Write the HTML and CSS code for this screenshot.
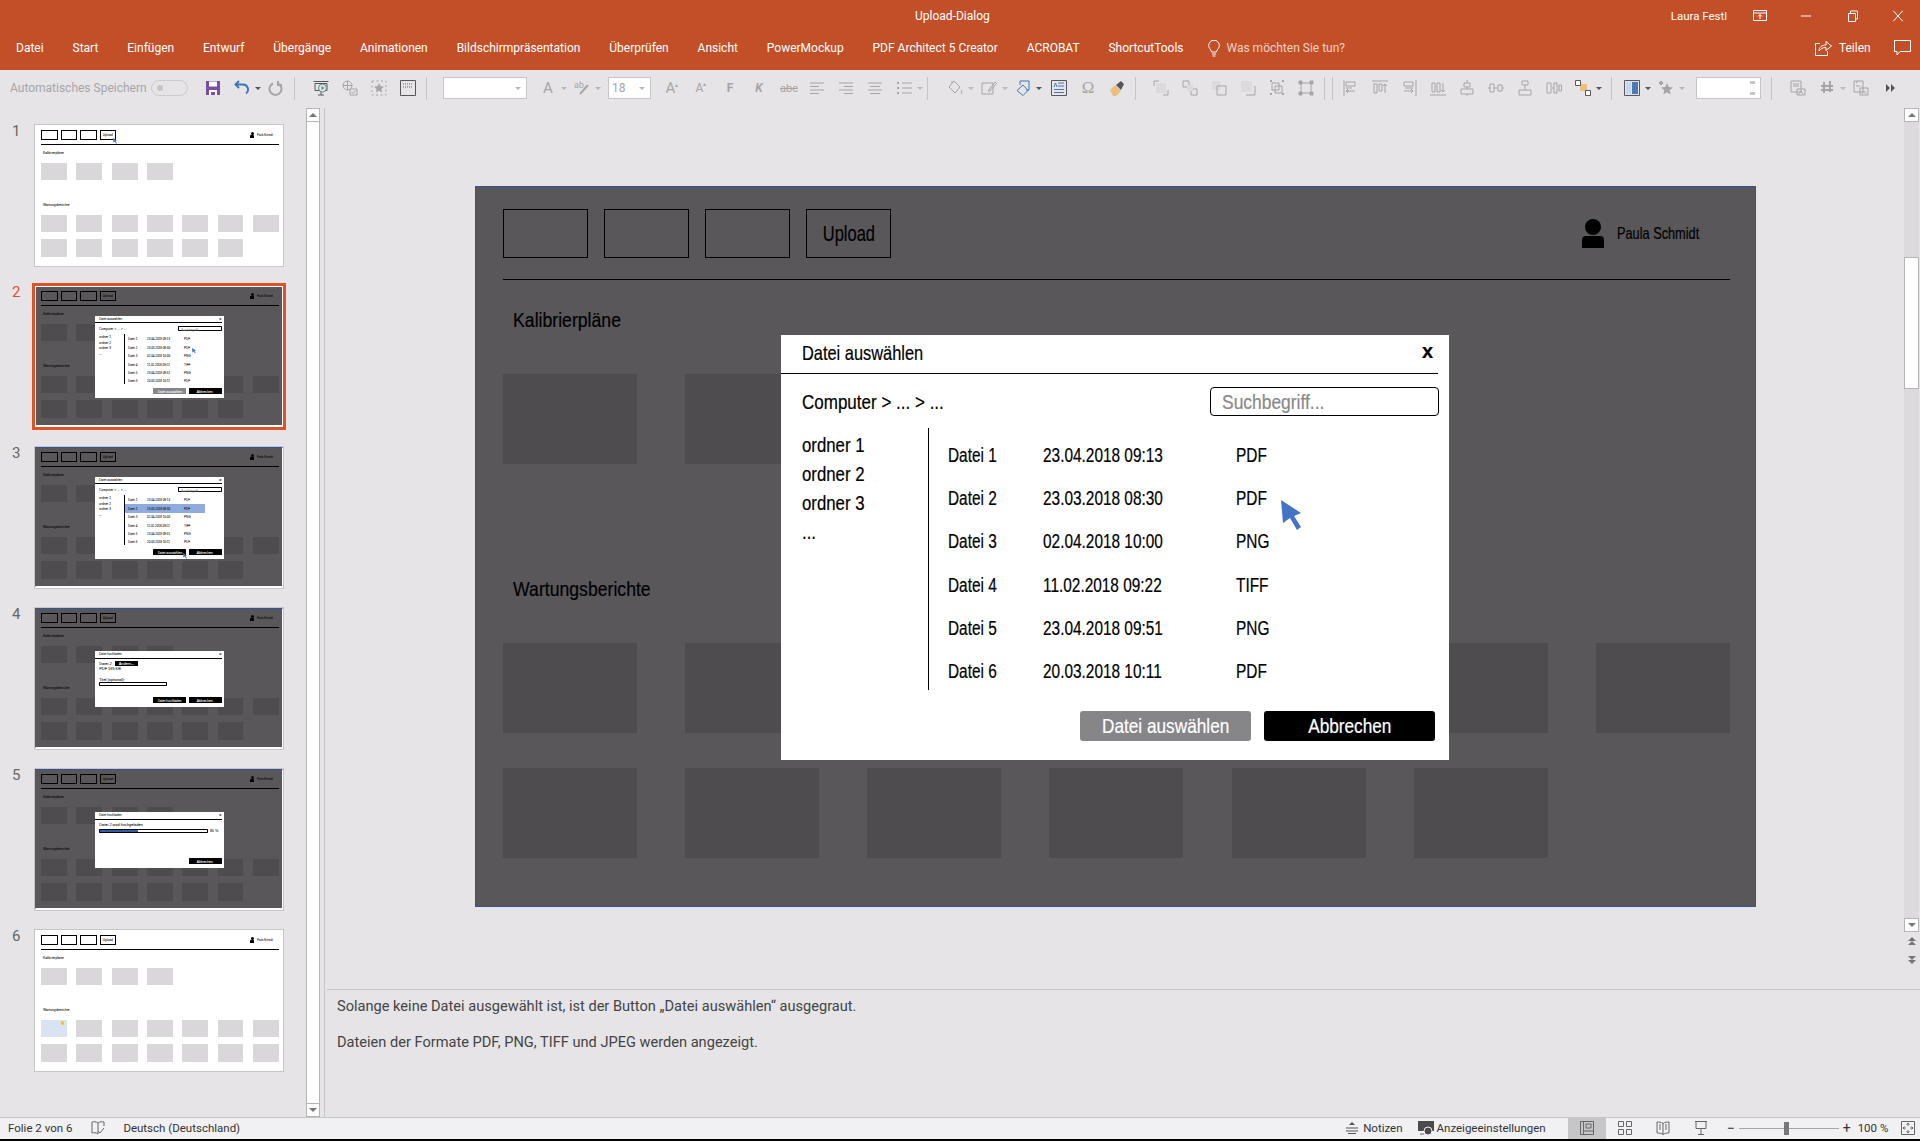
FILE: index.html
```html
<!DOCTYPE html>
<html lang="de">

<head>
  <meta charset="UTF-8" />
  <title>Upload-Dialog</title>
  <link rel="stylesheet" href="styles.css">
</head>

<body>
  <!-- Titelleiste -->
  <header class="titlebar">
    <span class="doc-title">Upload-Dialog</span>
    <span class="user-name">Laura Festl</span>
    <svg class="win-icon ribbon-mode" viewBox="0 0 14 12"><path d="M.5 .5h13v10H.5zM.5 3h13M7 9V4.500M5 6.500L7 4.500l2 2" /></svg>
    <svg class="win-icon minimize" viewBox="0 0 10 12"><path d="M0 6h10" /></svg>
    <svg class="win-icon restore" viewBox="0 0 10 12"><path d="M.5 3.500h7v8h-7zM2.500 3.500V1h7v8H7.500" /></svg>
    <svg class="win-icon close" viewBox="0 0 10 12"><path d="M0 .5l10 11M10 .5L0 11.500" /></svg>
  </header>

  <!-- Menüband -->
  <nav class="tabs">
    <span>Datei</span><span>Start</span><span>Einfügen</span><span>Entwurf</span><span>Übergänge</span><span>Animationen</span><span>Bildschirmpräsentation</span><span>Überprüfen</span><span>Ansicht</span><span>PowerMockup</span><span>PDF Architect 5 Creator</span><span>ACROBAT</span><span>ShortcutTools</span>
    <span class="tell-me">
      <svg class="bulb" viewBox="0 0 12 17"><path d="M3.500 12C3 9 .7 8.500 .7 5.500a5.300 5.300 0 0 1 10.600 0C11.300 8.500 9 9 8.500 12zM4 14h4M4.500 16h3" /></svg>
      Was möchten Sie tun?
    </span>
    <span class="share">
      <svg class="share-icon" viewBox="0 0 17 16"><path d="M5 3.500H.5v12h12V11M4 11c0-4 3-6 7-6V1.500L16.500 6 11 10.500V7.500c-3 0-5 1-7 3.500z" /></svg>
      Teilen
    </span>
    <svg class="comment-icon" viewBox="0 0 17 16"><path d="M.5 .5h16v11H6l-3 3.500v-3.500H.5z" /></svg>
  </nav>

  <!-- Symbolleiste -->
  <div class="toolbar">
    <span class="autosave">Automatisches Speichern</span>
    <span class="toggle"><i></i></span>
    <svg class="tool save" viewBox="0 0 16 16"><path fill="#7b4fa6" stroke="none" d="M1 1h14v14H1z" /><path fill="#fff" stroke="none" d="M4 1.500h8v5H4zM4 10h8v5H4z" /><path fill="#7b4fa6" stroke="none" d="M6 12h4v3H6z" /></svg>
    <svg class="tool" viewBox="0 0 16 16"><path class="blue" d="M5 1L1.500 4.500 5 8M2 4.500h7a5 5 0 0 1 3 9" /></svg>
    <i class="caret dark"></i>
    <svg class="tool" viewBox="0 0 16 16"><path class="thick" d="M5 3.500a6 6 0 1 0 5 0M10 1v4h4" /></svg>
    <i class="sep sep-wide"></i>
    <svg class="tool" viewBox="0 0 16 16"><path class="dark" d="M.5 1.500h15M2 3.500h12v7H2zM8 11v4M5 15h6" /><circle cx="9.500" cy="8" r="4" fill="#e6e4e7" stroke="#5a8a8a" /><path d="M8.500 6l3 2-3 2z" fill="#5a8a8a" stroke="none" /></svg>
    <svg class="tool" viewBox="0 0 16 16"><circle cx="5.500" cy="5.500" r="4.500" /><path d="M1 5.500h9M5.500 1v9M8 9h7v6H8zM9.500 12l1.500 1.500 2.500-3" /></svg>
    <svg class="tool" viewBox="0 0 16 16"><path d="M1 1h14v14H1z" stroke-dasharray="2 2.500" /><path fill="#a6a4a8" stroke="none" d="M8 3l1.500 3.300 3.500.4-2.600 2.400.7 3.500L8 10.800l-3.100 1.800.7-3.500L3 6.700l3.500-.4z" /></svg>
    <svg class="tool" viewBox="0 0 16 16"><path class="dark" d="M.5 .5h15v15H.5z" /><path class="blue-thin" d="M3 4h10M3 7h10" stroke-dasharray="1 1" /></svg>
    <i class="sep sep-box"></i>
    <span class="field field-font"><i class="caret"></i></span>
    <span class="tool-text size-lg">A</span>
    <i class="caret"></i>
    <svg class="tool" viewBox="0 0 16 16"><text x="0" y="8" class="mini-label">ab</text><path class="thick" d="M6 14L14 5" /></svg>
    <i class="caret"></i>
    <span class="field field-size">18<i class="caret"></i></span>
    <span class="tool-text size-lg">A<sup>▴</sup></span>
    <span class="tool-text">A<sup>▴</sup></span>
    <span class="tool-text bold">F</span>
    <span class="tool-text bold italic">K</span>
    <span class="tool-text strike">abc</span>
    <svg class="tool" viewBox="0 0 16 16"><path d="M1 3h14M1 6.500h9M1 10h14M1 13.500h9" /></svg>
    <svg class="tool" viewBox="0 0 16 16"><path d="M1 3h14M6 6.500h9M1 10h14M6 13.500h9" /></svg>
    <svg class="tool" viewBox="0 0 16 16"><path d="M1 3h14M3 6.500h10M1 10h14M3 13.500h10" /></svg>
    <svg class="tool" viewBox="0 0 16 16"><path d="M6 3h10M6 8h10M6 13h10" /><path class="thick" d="M1 3h2M1 8h2M1 13h2" /></svg>
    <i class="caret"></i>
    <i class="sep sep-fill"></i>
    <svg class="tool" viewBox="0 0 16 16"><path d="M7 1l6 6-5 6-6-6zM5 3V1M14 10c1 2 1 3 0 4" /></svg>
    <i class="caret"></i>
    <svg class="tool" viewBox="0 0 16 16"><path d="M1 3h11v11H1zM7 11l7-9 1.500 1.500L9 11z" /></svg>
    <i class="caret"></i>
    <svg class="tool" viewBox="0 0 16 16"><path class="blue-thin" d="M5 5V1h9v9h-3M8 5l5 5.500L8 15.500 2 10.500z" /></svg>
    <i class="caret dark"></i>
    <svg class="tool after-caret" viewBox="0 0 16 16"><path class="dark" d="M.5 .5h15v15H.5z" /><path class="blue-thin" d="M7 3h6M7 6h6M3 9.500h10M3 12.500h10M3 7l1.500-4L6 7" /></svg>
    <span class="tool-text omega">Ω</span>
    <svg class="tool" viewBox="0 0 16 16"><path fill="#edbf7c" stroke="none" d="M1 10l5-5 6 6-5 5H4z" /><path fill="#55565a" stroke="none" d="M7 5l5-4 3 3-3 6z" /></svg>
    <i class="sep sep-arrange"></i>
    <svg class="tool" viewBox="0 0 16 16"><path d="M1 1h5M1 1v5M15 15h-5M15 15v-5" /><path fill="#dcdadd" stroke="none" d="M3 3h10v10H3z" /></svg>
    <svg class="tool" viewBox="0 0 16 16"><path d="M1 1h6v6H1zM9 9h6v6H9z" /><path fill="#dcdadd" stroke="none" d="M5 5h6v6H5z" /></svg>
    <svg class="tool" viewBox="0 0 16 16"><path fill="#dcdadd" stroke="none" d="M1 1h9v9H1z" /><path d="M6 6h9v9H6z" /></svg>
    <svg class="tool" viewBox="0 0 16 16"><path fill="#dcdadd" stroke="none" d="M1 1h11v11H1z" /><path d="M6 15h9V6" /></svg>
    <svg class="tool" viewBox="0 0 16 16"><path d="M3 3h7v7H3zM6 6h7v7H6z" /><path class="thick" d="M1 1h2M13 1h2M1 14h2M13 14h2" /></svg>
    <svg class="tool" viewBox="0 0 16 16"><path d="M3 3h10v10H3z" /><path class="square" d="M1 1h3v3H1zM12 1h3v3h-3zM1 12h3v3H1zM12 12h3v3h-3z" /></svg>
    <i class="sep"></i>
    <i class="sep"></i>
    <svg class="tool" viewBox="0 0 16 16"><path d="M1 0v16M3 2h9v4H3zM3 8h6M6 11H3M5 9l-2 2 2 2M3 11h9" /></svg>
    <svg class="tool" viewBox="0 0 16 16"><path d="M0 1h16M2 4h3v9H2zM7 4h3v7H7zM13 13V4M11 6l2-2 2 2" /></svg>
    <svg class="tool" viewBox="0 0 16 16"><path d="M15 0v16M3 2h9v4H3zM4 8h8M3 11h9M10 9l2 2-2 2" /></svg>
    <svg class="tool" viewBox="0 0 16 16"><path d="M0 15h16M2 3h3v9H2zM7 3h3v9H7zM13 3v9M11 10l2 2 2-2" /></svg>
    <svg class="tool" viewBox="0 0 16 16"><path d="M8 0v3M8 7v2M8 14v2M5 3h6v4H5zM2 9h12v5H2z" /></svg>
    <svg class="tool" viewBox="0 0 16 16"><path d="M0 8h2M6 8h3M14 8h2M2 4h4v8H2zM10 5h4v6h-4z" /></svg>
    <svg class="tool" viewBox="0 0 16 16"><path d="M5 1h6v4H5zM2 10h12v5H2zM8 5v5" /></svg>
    <svg class="tool" viewBox="0 0 16 16"><path d="M1 3h4v10H1zM6 8h2M8 3h3v10H8zM13 5h2.500v6H13z" /></svg>
    <svg class="tool" viewBox="0 0 16 16"><path fill="#edbf7c" stroke="none" d="M5 4h7v7H5z" /><path class="dark" fill="#fff" d="M.5 .5h5v5h-5zM10.500 10.500h5v5h-5z" /></svg>
    <i class="caret dark"></i>
    <i class="sep sep-theme"></i>
    <svg class="tool" viewBox="0 0 16 16"><path d="M.5 .5h15v15H.5z" class="dark" /><path fill="#c7d6ec" stroke="none" d="M2 2h5v12H2z" /><path fill="#4a7ab5" stroke="none" d="M8 2h6v12H8z" /></svg>
    <i class="caret dark"></i>
    <svg class="tool" viewBox="0 0 16 16"><path fill="#a6a4a8" stroke="none" d="M9 3l1.700 4 4.300.4-3.300 2.800 1 4.300L9 12.300 5.300 14.500l1-4.300L3 7.400l4.300-.4z" /><path class="thick" d="M3 1v4M1 3h4" /></svg>
    <i class="caret"></i>
    <span class="field field-spin"><i class="spin"></i></span>
    <i class="sep sep-compare"></i>
    <svg class="tool" viewBox="0 0 16 16"><path d="M1 1h10v11H1zM3 4h6M3 6h6M7 9h8v6H7zM9 14l2-3 2 3" /></svg>
    <svg class="tool" viewBox="0 0 16 16"><path class="thick" d="M5 2v11M11 1v11M2 6h12M2 10h12" /></svg>
    <i class="caret"></i>
    <svg class="tool" viewBox="0 0 16 16"><path d="M1 1h9v11H1zM7 8h8v7H7zM9 14l2-3 2 3M3 3l2-2M3 6h4" /></svg>
    <svg class="tool more" viewBox="0 0 16 16"><path class="more-arrows" d="M4 4l4 4-4 4zM9 4l4 4-4 4z" /></svg>
  </div>

  <main class="workspace">
    <!-- Folienübersicht -->
    <aside class="panel">
      <ol class="thumbs">
        <li class="thumb-row">
          <span class="thumb-num">1</span>
          <div class="thumb">
            <div class="slide">
              <div class="slide-nav"><span class="nav-box"></span><span class="nav-box"></span><span class="nav-box"></span><span class="nav-box hand"><span>Upload</span></span>
                <span class="person"><i class="head"></i><i class="body"></i></span><span class="person-name hand">Paula Schmidt</span></div>
              <hr class="rule">
              <h2 class="heading hand">Kalibrierpläne</h2>
              <div class="tile-row"><i></i><i></i><i></i><i></i></div>
              <h2 class="heading heading-low hand">Wartungsberichte</h2>
              <div class="tile-row"><i></i><i></i><i></i><i></i><i></i><i></i><i></i></div>
              <div class="tile-row tile-row-last"><i></i><i></i><i></i><i></i><i></i><i></i></div>
              <svg class="pointer at-upload" viewBox="0 0 20 30"><path d="M0 0l2 23 7-5 7 12 4-3-7-11 7-3z" /></svg>
            </div>
          </div>
        </li>
        <li class="thumb-row current">
          <span class="thumb-num">2</span>
          <div class="thumb">
            <div class="slide dim">
              <div class="slide-nav"><span class="nav-box"></span><span class="nav-box"></span><span class="nav-box"></span><span class="nav-box hand"><span>Upload</span></span>
                <span class="person"><i class="head"></i><i class="body"></i></span><span class="person-name hand">Paula Schmidt</span></div>
              <hr class="rule">
              <h2 class="heading hand">Kalibrierpläne</h2>
              <div class="tile-row"><i></i><i></i><i></i><i></i></div>
              <h2 class="heading heading-low hand">Wartungsberichte</h2>
              <div class="tile-row"><i></i><i></i><i></i><i></i><i></i><i></i><i></i></div>
              <div class="tile-row tile-row-last"><i></i><i></i><i></i><i></i><i></i><i></i></div>
              <section class="dialog hand">
                <div class="dialog-head"><span class="dialog-title">Datei auswählen</span><span class="dialog-x">x</span></div>
                <div class="crumb-row"><span class="crumb">Computer &gt; ... &gt; ...</span><span class="search"><span>Suchbegriff...</span></span></div>
                <div class="dialog-body">
                  <ul class="folders"><li>ordner 1</li><li>ordner 2</li><li>ordner 3</li><li>...</li></ul>
                  <div class="files">
                    <div class="file"><span>Datei 1</span><span>23.04.2018 09:13</span><span>PDF</span></div>
                    <div class="file"><span>Datei 2</span><span>23.03.2018 08:30</span><span>PDF</span></div>
                    <div class="file"><span>Datei 3</span><span>02.04.2018 10:00</span><span>PNG</span></div>
                    <div class="file"><span>Datei 4</span><span>11.02.2018 09:22</span><span>TIFF</span></div>
                    <div class="file"><span>Datei 5</span><span>23.04.2018 09:51</span><span>PNG</span></div>
                    <div class="file"><span>Datei 6</span><span>20.03.2018 10:11</span><span>PDF</span></div>
                  </div>
                </div>
                <div class="dialog-foot"><span class="btn btn-off"><span>Datei auswählen</span></span><span class="btn"><span>Abbrechen</span></span></div>
                <svg class="pointer at-file" viewBox="0 0 20 30"><path d="M0 0l2 23 7-5 7 12 4-3-7-11 7-3z" /></svg>
              </section>
            </div>
          </div>
        </li>
        <li class="thumb-row">
          <span class="thumb-num">3</span>
          <div class="thumb">
            <div class="slide dim">
              <div class="slide-nav"><span class="nav-box"></span><span class="nav-box"></span><span class="nav-box"></span><span class="nav-box hand"><span>Upload</span></span>
                <span class="person"><i class="head"></i><i class="body"></i></span><span class="person-name hand">Paula Schmidt</span></div>
              <hr class="rule">
              <h2 class="heading hand">Kalibrierpläne</h2>
              <div class="tile-row"><i></i><i></i><i></i><i></i></div>
              <h2 class="heading heading-low hand">Wartungsberichte</h2>
              <div class="tile-row"><i></i><i></i><i></i><i></i><i></i><i></i><i></i></div>
              <div class="tile-row tile-row-last"><i></i><i></i><i></i><i></i><i></i><i></i></div>
              <section class="dialog hand">
                <div class="dialog-head"><span class="dialog-title">Datei auswählen</span><span class="dialog-x">x</span></div>
                <div class="crumb-row"><span class="crumb">Computer &gt; ... &gt; ...</span><span class="search"><span>Suchbegriff...</span></span></div>
                <div class="dialog-body">
                  <ul class="folders"><li>ordner 1</li><li>ordner 2</li><li>ordner 3</li><li>...</li></ul>
                  <div class="files">
                    <div class="file"><span>Datei 1</span><span>23.04.2018 09:13</span><span>PDF</span></div>
                    <div class="file selected"><span>Datei 2</span><span>23.03.2018 08:30</span><span>PDF</span></div>
                    <div class="file"><span>Datei 3</span><span>02.04.2018 10:00</span><span>PNG</span></div>
                    <div class="file"><span>Datei 4</span><span>11.02.2018 09:22</span><span>TIFF</span></div>
                    <div class="file"><span>Datei 5</span><span>23.04.2018 09:51</span><span>PNG</span></div>
                    <div class="file"><span>Datei 6</span><span>20.03.2018 10:11</span><span>PDF</span></div>
                  </div>
                </div>
                <div class="dialog-foot"><span class="btn"><span>Datei auswählen</span></span><span class="btn"><span>Abbrechen</span></span></div>
                <svg class="pointer at-button" viewBox="0 0 20 30"><path d="M0 0l2 23 7-5 7 12 4-3-7-11 7-3z" /></svg>
              </section>
            </div>
          </div>
        </li>
        <li class="thumb-row">
          <span class="thumb-num">4</span>
          <div class="thumb">
            <div class="slide dim">
              <div class="slide-nav"><span class="nav-box"></span><span class="nav-box"></span><span class="nav-box"></span><span class="nav-box hand"><span>Upload</span></span>
                <span class="person"><i class="head"></i><i class="body"></i></span><span class="person-name hand">Paula Schmidt</span></div>
              <hr class="rule">
              <h2 class="heading hand">Kalibrierpläne</h2>
              <div class="tile-row"><i></i><i></i><i></i><i></i></div>
              <h2 class="heading heading-low hand">Wartungsberichte</h2>
              <div class="tile-row"><i></i><i></i><i></i><i></i><i></i><i></i><i></i></div>
              <div class="tile-row tile-row-last"><i></i><i></i><i></i><i></i><i></i><i></i></div>
              <section class="dialog dialog-short hand">
                <div class="dialog-head"><span class="dialog-title">Datei hochladen</span><span class="dialog-x">x</span></div>
                <div class="upload-info">
                  <div>Datei 2 <span class="mini-btn">Ändern...</span></div>
                  <div>PDF 165 KB</div>
                  <div class="title-label">Titel (optional):</div>
                  <div class="title-input"></div>
                </div>
                <div class="dialog-foot"><span class="btn"><span>Datei hochladen</span></span><span class="btn"><span>Abbrechen</span></span></div>
              </section>
            </div>
          </div>
        </li>
        <li class="thumb-row">
          <span class="thumb-num">5</span>
          <div class="thumb">
            <div class="slide dim">
              <div class="slide-nav"><span class="nav-box"></span><span class="nav-box"></span><span class="nav-box"></span><span class="nav-box hand"><span>Upload</span></span>
                <span class="person"><i class="head"></i><i class="body"></i></span><span class="person-name hand">Paula Schmidt</span></div>
              <hr class="rule">
              <h2 class="heading hand">Kalibrierpläne</h2>
              <div class="tile-row"><i></i><i></i><i></i><i></i></div>
              <h2 class="heading heading-low hand">Wartungsberichte</h2>
              <div class="tile-row"><i></i><i></i><i></i><i></i><i></i><i></i><i></i></div>
              <div class="tile-row tile-row-last"><i></i><i></i><i></i><i></i><i></i><i></i></div>
              <section class="dialog dialog-short hand">
                <div class="dialog-head"><span class="dialog-title">Datei hochladen</span><span class="dialog-x">x</span></div>
                <div class="upload-info">
                  <div>Datei 2 wird hochgeladen</div>
                  <div class="progress"><span class="progress-bar"><i class="progress-fill"></i></span>35 %</div>
                </div>
                <div class="dialog-foot"><span class="btn"><span>Abbrechen</span></span></div>
              </section>
            </div>
          </div>
        </li>
        <li class="thumb-row">
          <span class="thumb-num">6</span>
          <div class="thumb">
            <div class="slide">
              <div class="slide-nav"><span class="nav-box"></span><span class="nav-box"></span><span class="nav-box"></span><span class="nav-box hand"><span>Upload</span></span>
                <span class="person"><i class="head"></i><i class="body"></i></span><span class="person-name hand">Paula Schmidt</span></div>
              <hr class="rule">
              <h2 class="heading hand">Kalibrierpläne</h2>
              <div class="tile-row"><i></i><i></i><i></i><i></i></div>
              <h2 class="heading heading-low hand">Wartungsberichte</h2>
              <div class="tile-row"><i class="tile-new"></i><i></i><i></i><i></i><i></i><i></i><i></i></div>
              <div class="tile-row tile-row-last"><i></i><i></i><i></i><i></i><i></i><i></i><i></i></div>
            </div>
          </div>
        </li>
      </ol>
      <div class="scroll-left">
        <span class="scroll-btn"><i class="arrow-up"></i></span>
        <span class="scroll-fill"></span>
        <span class="scroll-btn"><i class="arrow-down"></i></span>
      </div>
    </aside>

    <div class="editor">
      <div class="stage">
        <!-- aktuelle Folie -->
        <div class="slide dim main-slide">
          <div class="slide-nav"><span class="nav-box"></span><span class="nav-box"></span><span class="nav-box"></span><span class="nav-box hand"><span>Upload</span></span>
            <span class="person"><i class="head"></i><i class="body"></i></span><span class="person-name hand">Paula Schmidt</span></div>
          <hr class="rule">
          <h2 class="heading hand">Kalibrierpläne</h2>
          <div class="tile-row"><i></i><i></i><i></i><i></i></div>
          <h2 class="heading heading-low hand">Wartungsberichte</h2>
          <div class="tile-row"><i></i><i></i><i></i><i></i><i></i><i></i><i></i></div>
          <div class="tile-row tile-row-last"><i></i><i></i><i></i><i></i><i></i><i></i></div>
          <section class="dialog hand">
            <div class="dialog-head"><span class="dialog-title">Datei auswählen</span><span class="dialog-x">x</span></div>
            <div class="crumb-row"><span class="crumb">Computer &gt; ... &gt; ...</span><span class="search"><span>Suchbegriff...</span></span></div>
            <div class="dialog-body">
              <ul class="folders"><li>ordner 1</li><li>ordner 2</li><li>ordner 3</li><li>...</li></ul>
              <div class="files">
                <div class="file"><span>Datei 1</span><span>23.04.2018 09:13</span><span>PDF</span></div>
                <div class="file"><span>Datei 2</span><span>23.03.2018 08:30</span><span>PDF</span></div>
                <div class="file"><span>Datei 3</span><span>02.04.2018 10:00</span><span>PNG</span></div>
                <div class="file"><span>Datei 4</span><span>11.02.2018 09:22</span><span>TIFF</span></div>
                <div class="file"><span>Datei 5</span><span>23.04.2018 09:51</span><span>PNG</span></div>
                <div class="file"><span>Datei 6</span><span>20.03.2018 10:11</span><span>PDF</span></div>
              </div>
            </div>
            <div class="dialog-foot"><span class="btn btn-off"><span>Datei auswählen</span></span><span class="btn"><span>Abbrechen</span></span></div>
            <svg class="pointer at-file" viewBox="0 0 20 30"><path d="M0 0l2 23 7-5 7 12 4-3-7-11 7-3z" /></svg>
          </section>
        </div>
        <div class="scroll-right">
          <span class="scroll-btn"><i class="arrow-up"></i></span>
          <span class="scroll-thumb"></span>
          <span class="scroll-btn scroll-btn-end"><i class="arrow-down"></i></span>
          <svg class="page-arrows" viewBox="0 0 10 28"><path d="M5 0l4 4H1zM5 4l4 4H1zM1 19l4 4 4-4zM1 23l4 4 4-4z" /></svg>
        </div>
      </div>
      <div class="notes">
        <p>Solange keine Datei ausgewählt ist, ist der Button „Datei auswählen“ ausgegraut.</p>
        <p>Dateien der Formate PDF, PNG, TIFF und JPEG werden angezeigt.</p>
      </div>
    </div>
  </main>

  <!-- Statusleiste -->
  <footer class="statusbar">
    <span>Folie 2 von 6</span>
    <svg class="status-icon spell" viewBox="0 0 14 14"><path d="M7 2C5 .5 3 .5 1 1v11c2-.5 4-.5 6 1V2zM7 2c2-1.500 4-1.500 6-1v4M7 10l2 2 4-5" /></svg>
    <span class="lang">Deutsch (Deutschland)</span>
    <svg class="status-icon notes-icon" viewBox="0 0 12 12"><path d="M0 6h12M0 9h12M2 11.500h8" /><path d="M6 0l3 3H3z" fill="#555" stroke="none" /></svg>
    <span class="status-notes">Notizen</span>
    <svg class="status-icon display-icon" viewBox="0 0 16 15"><path fill="#4c4a4d" stroke="none" d="M0 0h16v10H0z" /><circle cx="10" cy="10" r="4" fill="#4c4a4d" stroke="#f1f0f2" /><path d="M2 13h4" /></svg>
    <span class="status-display">Anzeigeeinstellungen</span>
    <span class="view view-on"><svg class="status-icon" viewBox="0 0 14 14"><path d="M.5 .5h13v13H.5zM3.500 .5v13M3.500 10h10M6 3h5v4H6z" /></svg></span>
    <span class="view"><svg class="status-icon" viewBox="0 0 14 14"><path d="M.5 .5h5v5h-5zM8.500 .5h5v5h-5zM.5 8.500h5v5h-5zM8.500 8.500h5v5h-5z" /></svg></span>
    <span class="view"><svg class="status-icon" viewBox="0 0 14 14"><path d="M1 1c2 0 4 0 6 1.500C9 1 11 1 13 1v11c-2 0-4 0-6 1.500C5 12 3 12 1 12zM7 2.500v11M3 4h2M3 6h2M3 8h2M9 4h2M9 6h2M9 8h2" /></svg></span>
    <span class="view"><svg class="status-icon" viewBox="0 0 14 14"><path d="M1 .5h12M2 .5v7h10v-7M7 7.500V13M4 13.500h6" /></svg></span>
    <span class="zoom-minus">−</span>
    <span class="slider"><i></i></span>
    <span class="zoom-plus">+</span>
    <span class="zoom-value">100 %</span>
    <svg class="status-icon fit" viewBox="0 0 14 14"><path d="M.5 .5h13v13H.5zM7 2v3M5.500 3.500L7 2l1.500 1.500M7 12V9M5.500 10.500L7 12l1.500-1.500M2 7h3M3.500 5.500L2 7l1.500 1.500M12 7H9M10.500 5.500L12 7l-1.500 1.500" /></svg>
  </footer>
  <div class="desktop-edge"></div>
</body>

</html>
```

FILE: styles.css
```css
* {
  margin: 0;
  padding: 0;
  list-style: none;
  box-sizing: border-box;
}

html,
body {
  height: 100%;
}

body {
  display: flex;
  flex-direction: column;
  overflow: hidden;
  background-color: #e6e4e7;
  color: #444;
  font-family: Roboto, "Liberation Sans", sans-serif;
  font-size: 12px;
}

/* Titelleiste */
.titlebar {
  height: 35px;
  display: flex;
  align-items: center;
  padding-bottom: 3px;
  background-color: #c24f28;
  color: #fff;
}

.doc-title {
  margin-left: 915px;
}

.user-name {
  margin-left: 681px;
  font-size: 11.500px;
}

.win-icon {
  height: 12px;
  flex: none;
  fill: none;
  stroke: #fff;
}

.ribbon-mode {
  width: 14px;
  margin-left: 26px;
}

.minimize {
  width: 10px;
  margin-left: 34px;
}

.restore {
  width: 10px;
  margin-left: 37px;
}

.close {
  width: 10px;
  margin-left: 35px;
}

/* Reiter */
.tabs {
  height: 35px;
  display: flex;
  align-items: center;
  gap: 28.900px;
  padding: 0 0 9px 16px;
  background-color: #c24f28;
  color: #fff;
}

.tell-me {
  display: flex;
  align-items: center;
  gap: 6px;
  margin-left: -4px;
  color: #f0d2c6;
}

.bulb {
  width: 12px;
  height: 17px;
  fill: none;
  stroke: #fff;
}

.share {
  display: flex;
  align-items: center;
  gap: 7px;
  margin-left: 441px;
}

.share-icon,
.comment-icon {
  width: 17px;
  height: 16px;
  fill: none;
  stroke: #fff;
}

.comment-icon {
  margin-left: -6px;
}

/* Symbolleiste */
.toolbar {
  height: 38px;
  display: flex;
  align-items: center;
  gap: 13px;
  padding: 0 0 2px 10px;
  white-space: nowrap;
}

.autosave {
  width: 133px;
  color: #a6a4a8;
}

.toggle {
  width: 37px;
  height: 16px;
  margin-left: -5px;
  padding: 4px 5px;
  border: 1px solid #cdcbce;
  border-radius: 8px;
}

.toggle i {
  display: block;
  width: 6px;
  height: 6px;
  border-radius: 50%;
  background-color: #c8c6c9;
}

.tool {
  width: 16px;
  height: 16px;
  flex: none;
  fill: none;
  stroke: #a6a4a8;
}

.save {
  margin-left: 4px;
}

.after-caret {
  margin-left: 2px;
}

.tool .blue {
  stroke: #3f77b8;
  stroke-width: 2;
}

.tool .blue-thin {
  stroke: #3f77b8;
}

.tool .dark {
  stroke: #58565a;
}

.tool .thick {
  stroke-width: 2;
}

.tool .square {
  fill: #a6a4a8;
}

.tool .more-arrows {
  fill: #555;
  stroke: none;
}

.mini-label {
  font-size: 9px;
  fill: #a6a4a8;
  stroke: none;
}

.caret {
  flex: none;
  width: 0;
  height: 0;
  margin: 0 -6px 0 -8px;
  border-left: 3px solid transparent;
  border-right: 3px solid transparent;
  border-top: 3px solid #b9b7ba;
}

.caret.dark {
  border-top-color: #555;
}

.sep {
  flex: none;
  width: 1px;
  height: 23px;
  margin: 0 -3px;
  background-color: #c6c4c7;
}

.sep-wide {
  margin-right: 5px;
}

.sep-box {
  margin-right: 3px;
}

.sep-fill {
  margin-right: 6px;
}

.sep-arrange {
  margin-right: 4px;
}

.sep-theme {
  margin: 0 -1px 0 2px;
}

.sep-compare {
  margin-right: 5px;
}

.field {
  flex: none;
  height: 22px;
  display: flex;
  align-items: center;
  justify-content: space-between;
  padding: 0 9px 0 3px;
  background-color: #fff;
  border: 1px solid #c6c4c7;
  color: #a6a4a8;
}

.field .caret {
  margin: 0;
}

.field-font {
  width: 84px;
  justify-content: flex-end;
  padding-right: 5px;
}

.field-size {
  width: 43px;
  padding-right: 5px;
}

.field-spin {
  width: 65px;
  margin-left: 4px;
  justify-content: flex-end;
  padding-right: 5px;
}

.spin {
  width: 5px;
  height: 14px;
  background: linear-gradient(#c6c4c7 3px, transparent 3px, transparent 11px, #c6c4c7 11px);
}

.tool-text {
  flex: none;
  width: 16px;
  text-align: center;
  color: #a6a4a8;
}

.size-lg {
  font-size: 15px;
}

.tool-text sup {
  font-size: 6px;
  vertical-align: 6px;
  line-height: 0;
}

.bold {
  font-weight: 700;
}

.italic {
  font-style: italic;
}

.strike {
  text-decoration: line-through;
  font-size: 11px;
}

.omega {
  font-size: 17px;
  font-family: "Liberation Serif", serif;
}

/* Arbeitsbereich */
.workspace {
  flex: 1;
  min-height: 0;
  display: flex;
}

.panel {
  width: 325px;
  flex: none;
  display: flex;
  border-right: 1px solid #c6c6c6;
}

.thumbs {
  width: 306px;
  flex: none;
  padding-top: 16px;
}

.thumb-row {
  display: flex;
  height: 161px;
  padding-left: 12px;
}

.thumb-num {
  width: 22px;
  font-size: 15px;
  line-height: 14px;
  color: #666;
}

.thumb {
  width: 250px;
  height: 143px;
  background-color: #fff;
  border: 1px solid #c6c6c6;
}

.thumb .slide {
  zoom: 0.1936;
}

.thumb .slide.dim {
  border-color: #2f5597 #fff #fff #3c5c94;
}

.current .thumb-num {
  color: #d9532b;
}

.current .thumb {
  outline: 3px solid #df5226;
  outline-offset: -1px;
  border-color: #fff;
}

.current .slide.dim {
  border-color: #fff;
}

.scroll-left {
  width: 14px;
  display: flex;
  flex-direction: column;
}

.scroll-btn {
  height: 14px;
  flex: none;
  display: flex;
  align-items: center;
  justify-content: center;
  background-color: #fff;
  border: 1px solid #b5b3b6;
}

.scroll-fill {
  flex: 1;
  background-color: #fff;
  border: solid #b5b3b6;
  border-width: 0 1px;
}

.arrow-up,
.arrow-down {
  width: 0;
  height: 0;
  border-left: 4px solid transparent;
  border-right: 4px solid transparent;
}

.arrow-up {
  border-bottom: 4px solid #777;
}

.arrow-down {
  border-top: 4px solid #777;
}

.editor {
  flex: 1;
  min-width: 0;
  display: flex;
  flex-direction: column;
  padding-left: 2px;
}

.stage {
  height: 881px;
  flex: none;
  display: flex;
  justify-content: space-between;
  padding: 78px 1px 0 148px;
}

.notes {
  flex: 1;
  padding: 6px 10px;
  border-top: 1px solid #c6c6c6;
  font-size: 14.600px;
  color: #444;
}

.notes p {
  line-height: 20px;
  margin-bottom: 16px;
}

.scroll-right {
  width: 15px;
  height: 824px;
  position: relative;
  margin-top: -78px;
  display: flex;
  flex-direction: column;
  background-color: #dcdadd;
}

.scroll-thumb {
  height: 132px;
  margin-top: 135px;
  background-color: #fff;
  border: 1px solid #b5b3b6;
}

.scroll-btn-end {
  margin-top: auto;
}

.page-arrows {
  position: absolute;
  left: 3px;
  top: 829px;
  width: 10px;
  height: 28px;
  fill: #777;
}

/* Folie */
.slide {
  width: 1281px;
  height: 721px;
  flex: none;
  position: relative;
  padding: 22px 25px 0 27px;
  background-color: #fff;
  border: 1px solid #fff;
  color: #000;
}

.slide.dim {
  background-color: #59575a;
  border-color: #2f5597;
}

/* Handschrift gibt es nicht als Font: schmal gezogen */
.hand {
  font-family: "Liberation Sans", sans-serif;
  font-size: 20px;
  font-weight: 400;
  white-space: nowrap;
  -webkit-text-stroke: 0.2px currentColor;
}

.slide-nav {
  height: 49px;
  display: flex;
  align-items: center;
  gap: 16px;
}

.nav-box {
  width: 85px;
  height: 49px;
  flex: none;
  display: flex;
  align-items: center;
  justify-content: center;
  border: 1px solid #000;
  font-size: 22px;
}

.nav-box span {
  transform: scaleX(0.75);
}

.person {
  width: 22px;
  flex: none;
  margin-left: 675px;
  display: flex;
  flex-direction: column;
  align-items: center;
  gap: 1px;
}

.head {
  width: 16px;
  height: 16px;
  border-radius: 50%;
  background-color: #000;
}

.body {
  width: 22px;
  height: 12px;
  border-radius: 4px 4px 0 0;
  background-color: #000;
}

.person-name {
  margin-left: -3px;
  font-size: 17px;
  transform: scaleX(0.75);
  transform-origin: left center;
}

.rule {
  height: 0;
  width: 1227px;
  margin-top: 21px;
  border: 0;
  border-top: 1px solid #000;
}

.thumb .rule {
  border-top-width: 8px;
}

.thumb .nav-box {
  border-width: 8px;
}

.heading {
  height: 94px;
  padding: 27px 0 0 12px;
  font-size: 21px;
  line-height: 26px;
  transform: scaleX(0.84);
  transform-origin: left center;
}

.heading-low {
  height: 179px;
  padding-top: 112px;
}

.tile-row {
  display: grid;
  grid-template-columns: repeat(7, 134px);
  justify-content: space-between;
  width: 1227px;
}

.tile-row-last {
  margin-top: 35px;
}

.tile-row i {
  height: 90px;
  position: relative;
  background-color: #d9d7da;
}

.dim .tile-row i {
  background-color: #4e4c4f;
}

.tile-row .tile-new {
  background-color: #dae3f3;
}

.tile-new::after {
  content: "";
  position: absolute;
  top: 4px;
  right: 14px;
  width: 18px;
  height: 24px;
  border-radius: 50%;
  background-color: #ffc000;
}

/* Dialog */
.dialog {
  position: absolute;
  left: 305px;
  top: 148px;
  width: 668px;
  height: 425px;
  background-color: #fff;
  color: #000;
}

.dialog-short {
  top: 217px;
  height: 289px;
}

.dialog-head {
  height: 39px;
  margin-right: 11px;
  padding: 5px 0 0 21px;
  display: flex;
  justify-content: space-between;
  font-size: 21px;
  line-height: 25px;
  border-bottom: 1px solid #000;
}

.thumb .dialog-head {
  border-bottom-width: 8px;
}

.dialog-title {
  transform: scaleX(0.78);
  transform-origin: left center;
}

.dialog-x {
  margin-right: 5px;
  font-size: 20px;
  line-height: 22px;
  font-weight: 700;
}

.crumb-row {
  height: 54px;
  padding: 13px 10px 12px 21px;
  display: flex;
  justify-content: space-between;
  align-items: center;
}

.crumb {
  font-size: 21px;
  transform: scaleX(0.81);
  transform-origin: left center;
}

.search {
  width: 229px;
  height: 29px;
  padding-left: 11px;
  line-height: 27px;
  font-size: 21px;
  color: #888;
  border: 1px solid #000;
  border-radius: 4px;
}

.thumb .search {
  border-width: 8px;
}

.search span {
  display: inline-block;
  transform: scaleX(0.83);
  transform-origin: left center;
}

.dialog-body {
  height: 262px;
  display: flex;
}

.folders {
  width: 147px;
  flex: none;
  padding: 3px 0 0 21px;
  line-height: 29px;
}

.folders li {
  transform: scaleX(0.84);
  transform-origin: left center;
}

.files {
  width: 420px;
  padding-top: 6px;
  border-left: 1px solid #000;
}

.thumb .files {
  border-left-width: 8px;
}

.file {
  height: 43.200px;
  display: grid;
  grid-template-columns: 95px 193px 1fr;
  align-items: center;
  padding-left: 19px;
}

.file span {
  transform: scaleX(0.77);
  transform-origin: left center;
}

.file.selected {
  background-color: #8faadc;
}

.dialog-foot {
  margin-top: 21px;
  padding-right: 14px;
  display: flex;
  justify-content: flex-end;
  gap: 13px;
}

.btn {
  width: 171px;
  height: 30px;
  display: flex;
  align-items: center;
  justify-content: center;
  border-radius: 3px;
  background-color: #000;
  color: #fff;
  font-size: 21px;
}

.btn span {
  transform: scaleX(0.82);
}

.btn-off {
  background-color: #868588;
}

.upload-info {
  padding: 12px 22px 0;
  line-height: 26px;
  height: 179px;
}

.mini-btn {
  display: inline-block;
  width: 120px;
  margin-left: 12px;
  text-align: center;
  background-color: #000;
  color: #fff;
}

.title-label {
  margin-top: 30px;
}

.title-input {
  width: 350px;
  height: 24px;
  border: 6px solid #000;
  border-radius: 4px;
}

.progress {
  display: flex;
  align-items: center;
  gap: 10px;
  margin-top: 8px;
}

.progress-bar {
  width: 560px;
  height: 22px;
  border: 6px solid #000;
  border-radius: 4px;
}

.progress-fill {
  display: block;
  width: 35%;
  height: 100%;
  background-color: #2f5fa8;
}

.pointer {
  position: absolute;
  width: 20px;
  height: 30px;
  fill: #4472c4;
}

.at-file {
  left: 500px;
  top: 165px;
}

.at-upload {
  left: 398px;
  top: 62px;
}

.at-button {
  left: 454px;
  top: 394px;
}

/* Statusleiste */
.statusbar {
  height: 22px;
  flex: none;
  display: flex;
  align-items: center;
  padding: 0 0 1px 8px;
  background-color: #f1f0f2;
  border-top: 1px solid #c6c6c6;
  color: #333;
  font-size: 11.500px;
}

.status-icon {
  width: 14px;
  height: 14px;
  flex: none;
  fill: none;
  stroke: #666;
}

.spell {
  margin-left: 19px;
}

.lang {
  margin-left: 18px;
}

.notes-icon {
  width: 12px;
  height: 12px;
  margin-left: 1106px;
  stroke: #555;
}

.status-notes {
  margin-left: 5px;
}

.display-icon {
  width: 16px;
  height: 15px;
  margin-left: 15px;
}

.status-display {
  margin-left: 3px;
}

.view {
  width: 38px;
  height: 21px;
  display: flex;
  align-items: center;
  justify-content: center;
}

.view-on {
  margin-left: 22px;
  background-color: #c6c5c7;
}

.zoom-minus {
  margin-left: 7px;
  font-size: 14px;
}

.slider {
  width: 100px;
  height: 1px;
  margin-left: 4px;
  position: relative;
  background-color: #a6a4a8;
}

.slider i {
  position: absolute;
  left: 45px;
  top: -6px;
  width: 5px;
  height: 13px;
  background-color: #777;
}

.zoom-plus {
  margin-left: 4px;
  font-size: 14px;
}

.zoom-value {
  margin-left: 7px;
}

.fit {
  margin-left: 13px;
}

.desktop-edge {
  height: 2px;
  flex: none;
  background-color: #000;
}
```
